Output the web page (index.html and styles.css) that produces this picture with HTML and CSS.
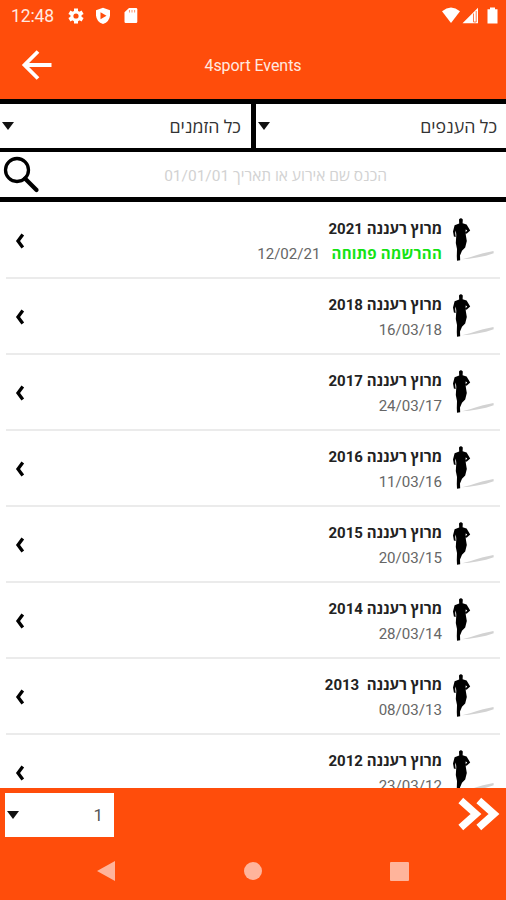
FILE: index.html
```html
<!DOCTYPE html>
<html lang="he">
<head>
<meta charset="utf-8">
<title>4sport Events</title>
<link rel="stylesheet" href="styles.css">
</head>
<body>
<svg class="defs" width="0" height="0" aria-hidden="true">
  <symbol id="runner" viewBox="0 0 46 48">
    <path d="M12 43.3 20 41.3 27 39 33 37.2 43.5 35 43.7 37.2 36 39.8 27 41.4 19 42.8Z" fill="#d2d2d2"/>
    <path d="M9 3.5Q10.9 .9 12.8 3.5L12.6 7.2 16.6 8.6 20.2 14.4 16.6 17.8 15.3 17 17.2 14.3 15.6 13.4 15.8 19 16.8 25 15.2 31.6 12 34.8 10 39.5 10.2 44.2 7 44.8 6.8 40 7 33 5.8 27 6.3 19 5.8 14.5 5.2 17 5.7 21 3.9 20.6 3 15.5 4.6 9.3 9.2 7.5Z"/>
  </symbol>
  <symbol id="chevron" viewBox="0 0 10 16"><path d="M7.8 1.6 3 8 7.8 14.4" fill="none" stroke="#000" stroke-width="3.3"/></symbol>
</svg>
<div class="screen">
  <header class="header">
    <div class="status">
      <span class="clock">12:48</span>
      <svg class="gear" width="16" height="16" viewBox="0 0 16 16"><g stroke="#fff" stroke-width="4"><path d="M8 .4V15.6M1.4 4.2 14.6 11.8M14.6 4.2 1.4 11.8"/></g><circle cx="8" cy="8" r="5.6" fill="#fff"/><circle cx="8" cy="8" r="2.6" fill="#ff4d0b"/></svg>
      <svg class="shield" width="16" height="18" viewBox="0 0 16 18"><path d="M8 .7 15 3.2V8.5Q14.5 14.8 8 17 1.5 14.8 1 8.5V3.2Z" fill="#fff"/><path d="M5.5 5.3 11.5 8.8 5.5 12.3Z" fill="#ff4d0b"/></svg>
      <svg class="card" width="14" height="17" viewBox="0 0 14 17"><path d="M5 1H12Q13.3 1 13.3 2.3V14.7Q13.3 16 12 16H1.7Q.5 16 .5 14.7V5.3Z" fill="#fff"/><path d="M5.5 3V5.5M8 3V5.5M10.6 3V5.5" stroke="#ff9a75" stroke-width="1.1"/></svg>
      <svg class="wifi" width="18" height="17" viewBox="0 0 18 17"><path d="M0 4.2Q9-3 18 4.2L9 16Z" fill="#fff"/></svg>
      <svg class="signal" width="17" height="17" viewBox="0 0 17 17"><path d="M.5 16.3 16 .8V16.3Z" fill="#fff"/><path d="M11.5 6.5V15H14.2V4" fill="none" stroke="#ff7a4a" stroke-width="1"/></svg>
      <svg class="battery" width="11" height="17" viewBox="0 0 11 17"><path d="M3 .5H8V2.2H10.5V16.5H.5V2.2H3Z" fill="#fff"/></svg>
    </div>
    <div class="titlebar">
      <svg class="back" width="32" height="32" viewBox="0 0 32 32"><path d="M30.5 16H4M17 2.5 3.5 16 17 29.5" fill="none" stroke="#fff" stroke-width="3.8"/></svg>
      <h1>4sport Events</h1>
    </div>
  </header>
  <div class="filters">
    <div class="filter times"><i class="caret"></i><span class="label" dir="rtl">כל הזמנים</span></div>
    <div class="filter types"><i class="caret"></i><span class="label" dir="rtl">כל הענפים</span></div>
  </div>
  <div class="search">
    <svg width="38" height="38" viewBox="0 0 38 38"><circle cx="14" cy="14" r="11.5" fill="none" stroke="#000" stroke-width="3.3"/><path d="M22 22.5 33.5 34" stroke="#000" stroke-width="4.2" stroke-linecap="round"/></svg>
    <span class="hint" dir="rtl">הכנס שם אירוע או תאריך 01/01/01</span>
  </div>
  <main class="list">
    <article class="row"><svg class="chev"><use href="#chevron"/></svg><div class="info" dir="rtl"><h2>מרוץ רעננה 2021</h2><p><b>ההרשמה פתוחה</b><span>12/02/21</span></p></div><svg class="runner"><use href="#runner"/></svg></article>
    <article class="row"><svg class="chev"><use href="#chevron"/></svg><div class="info" dir="rtl"><h2>מרוץ רעננה 2018</h2><p><span>16/03/18</span></p></div><svg class="runner"><use href="#runner"/></svg></article>
    <article class="row"><svg class="chev"><use href="#chevron"/></svg><div class="info" dir="rtl"><h2>מרוץ רעננה 2017</h2><p><span>24/03/17</span></p></div><svg class="runner"><use href="#runner"/></svg></article>
    <article class="row"><svg class="chev"><use href="#chevron"/></svg><div class="info" dir="rtl"><h2>מרוץ רעננה 2016</h2><p><span>11/03/16</span></p></div><svg class="runner"><use href="#runner"/></svg></article>
    <article class="row"><svg class="chev"><use href="#chevron"/></svg><div class="info" dir="rtl"><h2>מרוץ רעננה 2015</h2><p><span>20/03/15</span></p></div><svg class="runner"><use href="#runner"/></svg></article>
    <article class="row"><svg class="chev"><use href="#chevron"/></svg><div class="info" dir="rtl"><h2>מרוץ רעננה 2014</h2><p><span>28/03/14</span></p></div><svg class="runner"><use href="#runner"/></svg></article>
    <article class="row"><svg class="chev"><use href="#chevron"/></svg><div class="info" dir="rtl"><h2>מרוץ רעננה&nbsp; 2013</h2><p><span>08/03/13</span></p></div><svg class="runner"><use href="#runner"/></svg></article>
    <article class="row"><svg class="chev"><use href="#chevron"/></svg><div class="info" dir="rtl"><h2>מרוץ רעננה 2012</h2><p><span>23/03/12</span></p></div><svg class="runner"><use href="#runner"/></svg></article>
  </main>
  <footer class="footer">
    <div class="pager">
      <div class="page"><i class="caret"></i><span>1</span></div>
      <svg width="44" height="36" viewBox="0 0 44 36"><path d="M3.8 3.5 19 17 3.8 30.5M21.8 3.5 37 17 21.8 30.5" fill="none" stroke="#fff" stroke-width="7.2"/></svg>
    </div>
    <nav class="nav">
      <svg width="18" height="20" viewBox="0 0 18 20"><path d="M0 10 18 0V20Z" fill="#ffb49b"/></svg>
      <svg width="18" height="18" viewBox="0 0 18 18"><circle cx="9" cy="9" r="9" fill="#ffb49b"/></svg>
      <svg width="19" height="19" viewBox="0 0 19 19"><rect width="19" height="19" rx="1" fill="#ffb49b"/></svg>
    </nav>
  </footer>
</div>
</body>
</html>
```
FILE: styles.css
```css
* { box-sizing: border-box; }
body { margin: 0; font-family: Roboto, "Open Sans", "DejaVu Sans", sans-serif; background: #fff; }
h1, h2, p { margin: 0; font-weight: 400; }
svg { display: block; flex: none; }
.defs { position: absolute; }
.screen { width: 506px; height: 900px; display: flex; flex-direction: column; overflow: hidden; }
.header { height: 99px; background: #ff4d0b; color: #fff; flex: none; }
.status { height: 31px; display: flex; align-items: center; padding: 0 8px 0 11px; }
.clock { font-size: 17.5px; width: 57px; color: #ffe9e0; letter-spacing: -.1px; line-height: 32px; padding-top: 1px; }
.shield { margin-left: 11px; }
.card { margin-left: 13px; }
.wifi { margin-left: auto; }
.signal { margin-left: 2px; }
.battery { margin-left: 8px; }
.titlebar { height: 68px; display: grid; grid-template-columns: 74px 1fr 74px; align-items: center; }
.back { margin-left: 21px; }
h1 { text-align: center; font-size: 16px; color: #ffe9e0; letter-spacing: -.05px; }
.filters { height: 53px; background: #000; display: flex; gap: 5px; padding: 5px 0 4px; flex: none; }
.filter { background: #fff; display: flex; align-items: center; justify-content: space-between; }
.times { width: 251px; padding: 0 10px 0 2px; }
.types { width: 250px; padding: 0 9px 0 2px; }
.caret { width: 0; height: 0; border: 6px solid transparent; border-top: 8px solid #111; border-bottom: 0; }
.label { font-size: 17.8px; color: #333; }
.search { height: 50px; border-bottom: 5px solid #000; display: flex; align-items: center; padding-left: 3px; flex: none; }
.hint { width: 346px; font-size: 15.5px; color: #d2d2d2; white-space: nowrap; }
.list { height: 586px; overflow: hidden; padding: 1px 6px 0; flex: none; }
.row { height: 76px; border-bottom: 2px solid #ebebeb; display: flex; align-items: flex-start; }
.chev { width: 10px; height: 16px; margin: 30px 0 0 9px; }
.info { flex: 1; padding-top: 16px; }
h2 { font-size: 15px; font-weight: 700; color: #222; line-height: 20px; }
.info p { display: flex; gap: 11px; line-height: 20px; margin-top: 5px; font-size: 15.1px; color: #666; }
.info b { color: #14e314; letter-spacing: .2px; }
.runner { width: 46px; height: 48px; margin: 13px 4px 0 8px; }
.footer { height: 112px; background: #ff4d0b; flex: none; }
.pager { height: 54px; display: flex; align-items: center; justify-content: space-between; padding: 0 5px; }
.page { width: 109px; height: 44px; background: #fff; display: flex; justify-content: space-between; align-items: center; padding: 0 11px 0 2px; color: #555; font-size: 17px; }
.nav { height: 58px; display: flex; justify-content: space-between; align-items: center; padding: 0 97px; }
```
